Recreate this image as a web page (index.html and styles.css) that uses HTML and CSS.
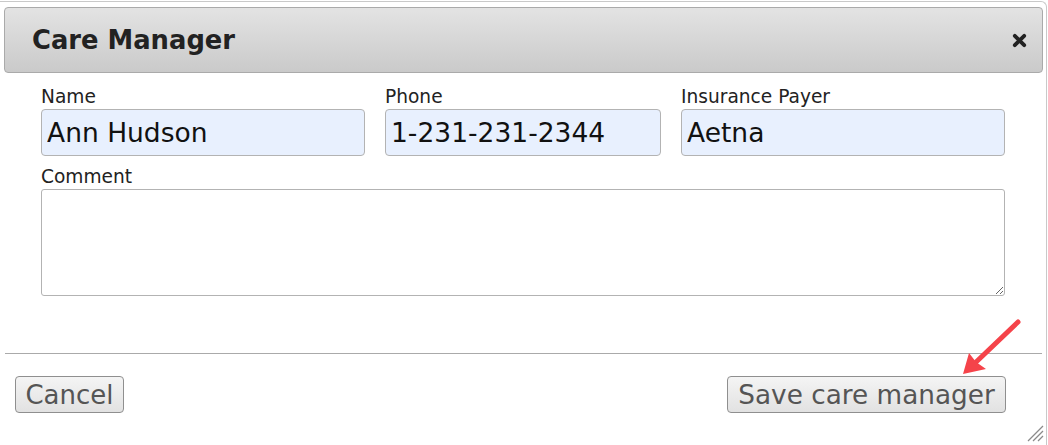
FILE: index.html
```html
<!DOCTYPE html>
<html>
<head>
<meta charset="utf-8">
<link rel="stylesheet" href="styles.css">
</head>
<body>
<div class="dialog">
  <div class="titlebar">
    <span class="title">Care Manager</span>
    <button class="close" aria-label="close">
      <svg width="15" height="15" viewBox="0 0 15 15"><path d="M2.8 2.8 L12.2 12.2 M12.2 2.8 L2.8 12.2" stroke="#222" stroke-width="3.8" stroke-linecap="round"/></svg>
    </button>
  </div>
  <div class="content">
    <div class="row3">
      <div class="field">
        <label class="lbl">Name</label>
        <input class="inp" type="text" value="Ann Hudson">
      </div>
      <div class="field">
        <label class="lbl">Phone</label>
        <input class="inp" type="text" value="1-231-231-2344">
      </div>
      <div class="field">
        <label class="lbl">Insurance Payer</label>
        <input class="inp" type="text" value="Aetna">
      </div>
    </div>
    <div class="field full">
      <label class="lbl">Comment</label>
      <textarea class="area"></textarea>
    </div>
  </div>
  <div class="buttonpane">
    <button class="btn btn-cancel">Cancel</button>
    <button class="btn btn-save">Save care manager</button>
  </div>
</div>
<svg class="overlay" width="1048" height="445" viewBox="0 0 1048 445">
  <line x1="1018" y1="322" x2="974" y2="364" stroke="#f5434a" stroke-width="5" stroke-linecap="round"/>
  <polygon points="963,374 969,353 976,362 986,369" fill="#f5434a"/>
  <g stroke="#8a8a8a" stroke-width="1.2">
    <line x1="1043" y1="426" x2="1028" y2="441"/>
    <line x1="1043" y1="431" x2="1033" y2="441"/>
    <line x1="1043" y1="436" x2="1038" y2="441"/>
  </g>
</svg>
</body>
</html>
```

FILE: styles.css
```css
html, body {
  margin: 0;
  padding: 0;
  background: #fff;
  overflow: hidden;
}
body {
  width: 1048px;
  height: 445px;
  font-family: "DejaVu Sans", Verdana, sans-serif;
  color: #222;
}
.dialog {
  margin-top: 1px;
  width: 1039px;
  height: 450px;
  padding: 5px 3px 0 4px;
  border-top: 1px solid #c9c9c9;
  border-right: 1px solid #c9c9c9;
  border-top-right-radius: 6px;
  background: #fff;
}
.titlebar {
  box-sizing: border-box;
  height: 66px;
  border: 1px solid #aaa;
  border-radius: 4px;
  background: linear-gradient(#e3e3e3, #cacaca);
  display: flex;
  align-items: center;
  justify-content: space-between;
  padding: 0 15px 0 27px;
}
.title {
  font-weight: bold;
  font-size: 25.8px;
  color: #222;
}
.close {
  border: none;
  background: transparent;
  padding: 0;
  width: 15px;
  height: 15px;
  display: flex;
  margin-top: 1px;
}
.content {
  padding: 13px 0 0 37px;
}
.row3 {
  display: grid;
  grid-template-columns: 324px 276px 324px;
  column-gap: 20px;
}
.field {
  display: flex;
  flex-direction: column;
}
.full {
  margin-top: 10px;
  width: 964px;
}
.lbl {
  font-size: 18.6px;
  line-height: 22px;
  color: #222;
  margin-bottom: 1px;
}
.inp {
  box-sizing: border-box;
  height: 47px;
  width: 100%;
  margin: 0;
  border: 1px solid #b3b3b3;
  border-radius: 4px;
  background: #e8f0fe;
  font-family: "DejaVu Sans", Verdana, sans-serif;
  font-size: 26.5px;
  color: #111;
  padding: 0 5px;
}
.area {
  box-sizing: border-box;
  display: block;
  width: 964px;
  height: 107px;
  margin: 0;
  border: 1px solid #b3b3b3;
  border-radius: 3px;
  background: #fff;
}
.buttonpane {
  margin: 57px 1px 0 1px;
  border-top: 1px solid #aaa;
  padding: 22px 36px 0 10px;
  display: flex;
  justify-content: space-between;
}
.btn {
  box-sizing: border-box;
  height: 37px;
  margin: 0;
  padding: 0;
  text-align: center;
  border: 1px solid #8f8f8f;
  border-radius: 4px;
  background: linear-gradient(#f4f4f4, #e2e2e2);
  font-family: "DejaVu Sans", Verdana, sans-serif;
  font-size: 26px;
  color: #555;
  line-height: 36px;
}
.btn-cancel {
  width: 109px;
}
.btn-save {
  width: 279px;
  font-size: 26.3px;
}
.overlay {
  position: absolute;
  left: 0;
  top: 0;
  pointer-events: none;
}
```
